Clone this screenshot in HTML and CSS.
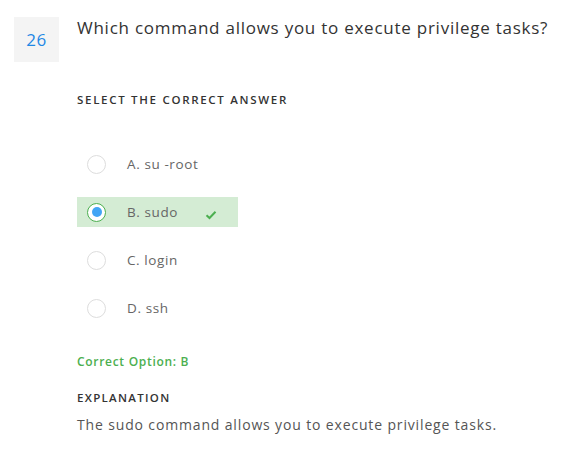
FILE: index.html
```html
<!DOCTYPE html>
<html>
<head>
<meta charset="utf-8">
<link rel="stylesheet" href="styles.css">
</head>
<body>
<div class="card">
  <div class="head">
    <div class="num">26</div>
    <div class="question">Which command allows you to execute privilege tasks?</div>
  </div>
  <div class="body">
    <div class="label">SELECT THE CORRECT ANSWER</div>
    <ul class="options">
      <li class="option"><span class="radio"></span><span class="text">A. su -root</span></li>
      <li class="option correct"><span class="radio checked"><span class="dot"></span></span><span class="text">B. sudo</span>
        <svg class="check" width="12" height="10" viewBox="0 0 12 10"><path d="M1.5 5.2 L4.5 8 L10.5 1.8" fill="none" stroke="#4caf50" stroke-width="2"/></svg>
      </li>
      <li class="option"><span class="radio"></span><span class="text">C. login</span></li>
      <li class="option"><span class="radio"></span><span class="text">D. ssh</span></li>
    </ul>
    <div class="answer">Correct Option: B</div>
    <div class="label expl-label">EXPLANATION</div>
    <div class="expl">The sudo command allows you to execute privilege tasks.</div>
  </div>
</div>
</body>
</html>
```
FILE: styles.css
```css
html, body {
  margin: 0;
  padding: 0;
  background: #fff;
}
body {
  font-family: "Open Sans", "Liberation Sans", sans-serif;
  color: #333;
}
.card {
  padding: 17px 14px;
}
.head {
  display: flex;
  gap: 18px;
}
.num {
  width: 45px;
  height: 45px;
  flex: none;
  background: #f4f4f4;
  color: #1e88e5;
  font-size: 17px;
  letter-spacing: 0.5px;
  display: flex;
  align-items: center;
  justify-content: center;
}
.question {
  font-size: 17px;
  letter-spacing: 0.75px;
  color: #333;
  line-height: 22px;
}
.body {
  padding-left: 63px;
}
.label {
  margin-top: 31px;
  font-size: 11.5px;
  font-weight: 600;
  letter-spacing: 1.7px;
  color: #333;
  line-height: 14px;
}
.options {
  list-style: none;
  margin: 42px 0 0 0;
  padding: 0;
  display: flex;
  flex-direction: column;
  gap: 18px;
}
.option {
  display: flex;
  align-items: center;
  height: 30px;
  width: 161px;
  font-size: 13.5px;
  letter-spacing: 0.6px;
  color: #666;
}
.option.correct {
  background: #d4ecd4;
}
.radio {
  width: 19px;
  height: 19px;
  border: 1px solid #ddd;
  border-radius: 50%;
  background: #fff;
  margin-left: 10px;
  box-sizing: border-box;
  display: flex;
  align-items: center;
  justify-content: center;
  flex: none;
}
.radio.checked {
  border-color: #4caf50;
}
.dot {
  width: 10px;
  height: 10px;
  border-radius: 50%;
  background: #42a5f5;
}
.text {
  margin-left: 21px;
}
.check {
  margin-left: 27px;
  margin-top: 5px;
}
.answer {
  margin-top: 30px;
  font-size: 12px;
  font-weight: 600;
  letter-spacing: 0.7px;
  color: #4caf50;
}
.expl-label {
  margin-top: 21px;
  letter-spacing: 1.3px;
}
.expl {
  margin-top: 10px;
  font-size: 14px;
  letter-spacing: 0.85px;
  color: #555;
}
```
